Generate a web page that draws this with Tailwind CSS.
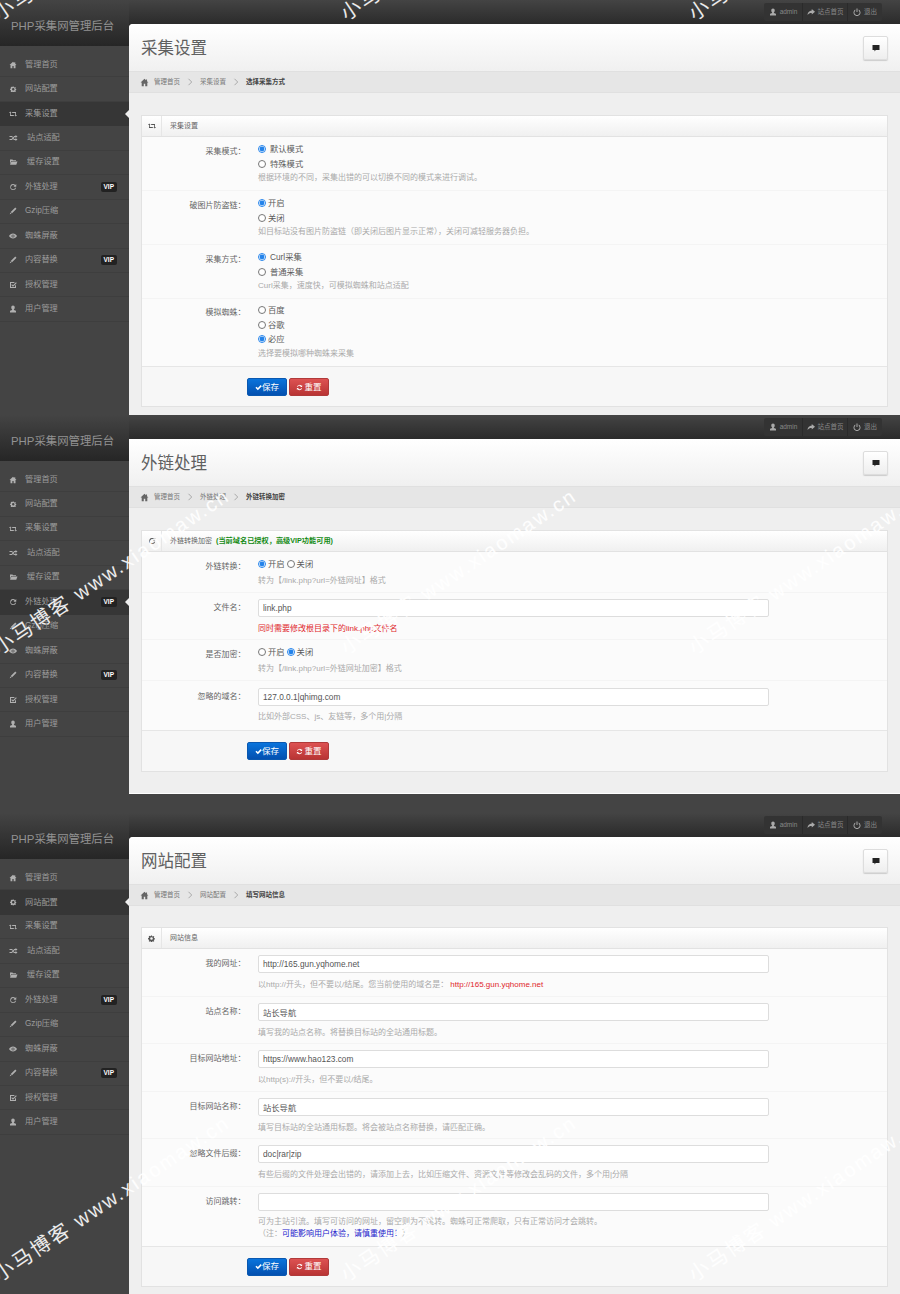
<!DOCTYPE html>
<html lang="zh-CN">
  <head>
    <meta charset="UTF-8" />
    <title>PHP采集网管理后台</title>
    <script src="https://cdn.jsdelivr.net/npm/@tailwindcss/browser@4"></script>
  </head>

  <body class="relative h-[1294px] overflow-hidden bg-[#444] font-['Liberation_Sans','Noto_Sans_CJK_SC',sans-serif]">
    <svg class="hidden">
      <symbol id="i-home" viewBox="0 0 16 16"><path d="M8 1.500 1 8h2v6.500h3.700V10h2.600v4.500H13V8h2l-2.500-2.300V2.500h-2v1.400z" /></symbol>
      <symbol id="i-cog" viewBox="0 0 16 16"><path fill-rule="evenodd" d="M6.800 1h2.400l.4 2 1.300.6 1.800-1.100 1.700 1.700-1.100 1.800.6 1.300 2 .4v2.400l-2 .4-.6 1.300 1.100 1.800-1.700 1.700-1.800-1.100-1.300.6-.4 2H6.800l-.4-2-1.300-.6-1.800 1.100-1.700-1.700 1.100-1.800-.6-1.300-2-.4V6.800l2-.4.6-1.300-1.100-1.800 1.700-1.700 1.800 1.100 1.300-.6zM8 5a3 3 0 1 0 0 6 3 3 0 0 0 0-6z" /></symbol>
      <symbol id="i-retweet" viewBox="0 0 16 16"><path d="M0 6 2.500 3 5 6H3.600v4H9l1.600 2H2V6zM16 10l-2.500 3L11 10h1.400V6H7L5.400 4H14v6z" /></symbol>
      <symbol id="i-random" viewBox="0 0 16 16"><path d="M12 2l4 3-4 3V6h-1.500L5 12H0v-2h4l5.500-6H12zM0 4h5l2 2.200-1.300 1.500L4 6H0zm12 4 4 3-4 3v-2H9l-2-2.200 1.300-1.500L10 10h2z" /></symbol>
      <symbol id="i-folder" viewBox="0 0 16 16"><path d="M1 3h5l1 1.500h6V6H3.500L1 12zM4 7h12l-2.500 6.500H1z" /></symbol>
      <symbol id="i-repeat" viewBox="0 0 16 16"><path d="M8 2a6 6 0 0 1 4.500 2L14.500 2v5.500H9l2-2A4 4 0 1 0 12 9.500h2.300A6 6 0 1 1 8 2z" /></symbol>
      <symbol id="i-pencil" viewBox="0 0 16 16"><path d="M12.500 1 15 3.500 6 12.500 3.500 10zM2.800 11l2.200 2.200-3.500 1.300z" /></symbol>
      <symbol id="i-eye" viewBox="0 0 16 16"><path fill-rule="evenodd" d="M8 3c3.500 0 6.300 2.300 8 5-1.700 2.700-4.500 5-8 5s-6.300-2.300-8-5c1.700-2.700 4.500-5 8-5zm0 2a3 3 0 1 0 0 6 3 3 0 0 0 0-6z" /><path d="M7 5h2v6H7z" /></symbol>
      <symbol id="i-check-box" viewBox="0 0 16 16"><path fill-rule="evenodd" d="M3 2h8.500L10 4H4v8h8V9.500l2-2V14H2V2zM14 2.500l1.500 1.500L8 11.500 4.500 8 6 6.500l2 2z" /></symbol>
      <symbol id="i-user" viewBox="0 0 16 16"><path d="M8 1c2.200 0 3.500 1.600 3.500 3.800 0 1.700-.8 3.200-1.700 4v1.400c2 .5 4.200 1.200 4.200 2.300V15H2v-2.500c0-1.100 2.200-1.800 4.200-2.300V8.800c-.9-.8-1.700-2.300-1.700-4C4.500 2.600 5.800 1 8 1z" /></symbol>
      <symbol id="i-share" viewBox="0 0 16 16"><path d="M9.500 2 16 7.500 9.500 13V9.800C5.500 9.800 2.800 11 1 14c.3-4.600 3.200-8.500 8.500-8.800z" /></symbol>
      <symbol id="i-off" viewBox="0 0 16 16"><path d="M7 1h2v7H7zM4.500 3v2.300a5 5 0 1 0 7 0V3a7 7 0 1 1-7 0z" /></symbol>
      <symbol id="i-comment" viewBox="0 0 16 16"><path d="M1 2h14v10H7.500L5 15v-3H1z" /></symbol>
      <symbol id="i-check" viewBox="0 0 16 16"><path d="M1 8.500 3.500 6l3 3L13 2.500 15.500 5l-9 9z" /></symbol>
      <symbol id="i-refresh" viewBox="0 0 16 16"><path d="M8 2a6 6 0 0 1 4.400 1.900L14 2.500V7H9.500l1.400-1.500A4 4 0 0 0 4.300 6.500H2.200A6 6 0 0 1 8 2zM2 9h4.500L5.100 10.500a4 4 0 0 0 6.600-1h2.100A6 6 0 0 1 3.600 12.100L2 13.500z" /></symbol>
      <symbol id="i-chevron" viewBox="0 0 6 8"><path d="M1.500 .8 4.700 4 1.500 7.200" fill="none" stroke="#999" stroke-width=".8" /></symbol>
    </svg>

    <!-- 采集设置 -->
    <section class="flex h-[415px] overflow-hidden">
      <aside class="w-[129px] shrink-0 bg-[#444]">
        <div class="flex h-[46px] items-center bg-gradient-to-b from-[#444] to-[#262626] pl-[11px] pt-[8px] text-[11.4px] text-[#929292]">PHP采集网管理后台</div>
        <nav class="pt-[7px] text-[8.2px] text-[#9c9c9c]">
          <a class="flex h-[24.45px] items-center border-b border-[#3e3e3e] pl-[9px]"><svg class="h-[8px] w-[8px] fill-[#b0b0b0]"><use href="#i-home" /></svg><span class="ml-[8px]">管理首页</span></a>
          <a class="flex h-[24.45px] items-center border-b border-[#3e3e3e] pl-[10px]"><svg class="h-[6.500px] w-[6.500px] fill-[#b0b0b0]"><use href="#i-cog" /></svg><span class="ml-[8.500px]">网站配置</span></a>
          <a class="relative flex h-[24.45px] items-center bg-[#363636] pl-[9px]"><svg class="h-[8px] w-[8px] fill-[#b0b0b0]"><use href="#i-retweet" /></svg><span class="ml-[8px]">采集设置</span><i class="absolute right-0 top-[8px] border-y-[4px] border-r-[4px] border-y-transparent border-r-[#efefef]"></i></a>
          <a class="flex h-[24.45px] items-center border-b border-[#3e3e3e] pl-[9px]"><svg class="h-[8px] w-[9px] fill-[#b0b0b0]"><use href="#i-random" /></svg><span class="ml-[9px]">站点适配</span></a>
          <a class="flex h-[24.45px] items-center border-b border-[#3e3e3e] pl-[9px]"><svg class="h-[8px] w-[9px] fill-[#b0b0b0]"><use href="#i-folder" /></svg><span class="ml-[9px]">缓存设置</span></a>
          <a class="flex h-[24.45px] items-center border-b border-[#3e3e3e] pl-[9px]"><svg class="h-[8px] w-[8px] fill-[#b0b0b0]"><use href="#i-repeat" /></svg><span class="ml-[8px]">外链处理</span><b class="ml-auto mr-[12px] rounded-[2px] bg-[#222] px-[3px] text-[6.5px] leading-[10px] text-white">VIP</b></a>
          <a class="flex h-[24.45px] items-center border-b border-[#3e3e3e] pl-[9px]"><svg class="h-[8px] w-[8px] fill-[#b0b0b0]"><use href="#i-pencil" /></svg><span class="ml-[8px]">Gzip压缩</span></a>
          <a class="flex h-[24.45px] items-center border-b border-[#3e3e3e] pl-[9px]"><svg class="h-[8px] w-[8px] fill-[#b0b0b0]"><use href="#i-eye" /></svg><span class="ml-[8px]">蜘蛛屏蔽</span></a>
          <a class="flex h-[24.45px] items-center border-b border-[#3e3e3e] pl-[9px]"><svg class="h-[8px] w-[8px] fill-[#b0b0b0]"><use href="#i-pencil" /></svg><span class="ml-[8px]">内容替换</span><b class="ml-auto mr-[12px] rounded-[2px] bg-[#222] px-[3px] text-[6.5px] leading-[10px] text-white">VIP</b></a>
          <a class="flex h-[24.45px] items-center border-b border-[#3e3e3e] pl-[9px]"><svg class="h-[8px] w-[8px] fill-[#b0b0b0]"><use href="#i-check-box" /></svg><span class="ml-[8px]">授权管理</span></a>
          <a class="flex h-[24.45px] items-center border-b border-[#3e3e3e] pl-[9px]"><svg class="h-[8px] w-[8px] fill-[#b0b0b0]"><use href="#i-user" /></svg><span class="ml-[8px]">用户管理</span></a>
        </nav>
      </aside>

      <div class="min-w-0 flex-1 bg-[#2b2b2b]">
        <div class="flex h-[24px] justify-end bg-gradient-to-b from-[#444] to-[#2b2b2b] pr-[18px] pt-[3px]">
          <div class="flex h-[18px] rounded-[2px] bg-[#333] text-[6.5px] text-[#888]">
            <a class="flex w-[39px] items-center justify-center gap-[3px] border-r border-[#2a2a2a]"><svg class="h-[8px] w-[8px] fill-[#aaa]"><use href="#i-user" /></svg>admin</a>
            <a class="flex w-[45px] items-center justify-center gap-[3px] border-r border-[#2a2a2a]"><svg class="h-[8px] w-[8px] fill-[#aaa]"><use href="#i-share" /></svg>站点首页</a>
            <a class="flex w-[34px] items-center justify-center gap-[3px]"><svg class="h-[8px] w-[8px] fill-[#aaa]"><use href="#i-off" /></svg>退出</a>
          </div>
        </div>
        <main class="h-[391px] rounded-tl-[4px] bg-[#efefef]">
          <div class="flex h-[47px] items-center justify-between rounded-tl-[4px] bg-gradient-to-b from-white to-[#f0f0f0] px-[12px]">
            <h1 class="mt-[2px] text-[16.5px] text-[#606060]">采集设置</h1>
            <button class="flex h-[24px] w-[25px] items-center justify-center rounded-[2px] border border-[#ddd] bg-gradient-to-b from-white to-[#eee] shadow-[0_1px_1px_#ccc]"><svg class="h-[8px] w-[8px] fill-[#222]"><use href="#i-comment" /></svg></button>
          </div>
          <div class="flex h-[22px] items-center border-y border-[#e0e0e0] bg-[#e6e6e6] pl-[11px] text-[6.5px] text-[#777]">
            <svg class="mr-[5px] mt-[1px] h-[9px] w-[9px] fill-[#666]"><use href="#i-home" /></svg>管理首页<svg class="mx-[7px] h-[8px] w-[6px]"><use href="#i-chevron" /></svg>采集设置<svg class="mx-[7px] h-[8px] w-[6px]"><use href="#i-chevron" /></svg><b class="text-[#444]">选择采集方式</b>
          </div>
          <div class="px-[12px] pt-[22px]">
            <div class="border border-[#e2e2e2] bg-[#fbfbfb]">
              <div class="flex h-[21px] items-center border-b border-[#e2e2e2] bg-gradient-to-b from-white to-[#f0f0f0]">
                <span class="flex h-full w-[20px] items-center justify-center border-r border-[#e6e6e6]"><svg class="h-[8px] w-[8px] fill-[#555]"><use href="#i-retweet" /></svg></span>
                <span class="ml-[8px] text-[7px] text-[#666]">采集设置</span>
              </div>

              <div class="flex h-[54px] border-b border-[#f4f4f4] pt-[5px]">
                <label class="mt-[3px] w-[103.500px] text-right text-[8px] leading-[14px] text-[#666]">采集模式：</label>
                <div class="ml-[12.500px] text-[8.3px] leading-[14.500px] text-[#5a5a5a]">
                  <div class="flex items-center"><input type="radio" checked class="m-0 h-[8px] w-[8px] accent-[#2483ea]" /><span class="ml-[4px]">默认模式</span></div>
                  <div class="flex items-center"><input type="radio" class="m-0 h-[8px] w-[8px]" /><span class="ml-[4px]">特殊模式</span></div>
                  <p class="text-[8px] text-[#aaa]">根据环境的不同，采集出错的可以切换不同的模式来进行调试。</p>
                </div>
              </div>
              <div class="flex h-[54px] border-b border-[#f4f4f4] pt-[5px]">
                <label class="mt-[3px] w-[103.500px] text-right text-[8px] leading-[14px] text-[#666]">破图片防盗链：</label>
                <div class="ml-[12.500px] text-[8.3px] leading-[14.500px] text-[#5a5a5a]">
                  <div class="flex items-center"><input type="radio" checked class="m-0 h-[8px] w-[8px] accent-[#2483ea]" /><span class="ml-[2px]">开启</span></div>
                  <div class="flex items-center"><input type="radio" class="m-0 h-[8px] w-[8px]" /><span class="ml-[2px]">关闭</span></div>
                  <p class="text-[8px] text-[#aaa]">如目标站没有图片防盗链（即关闭后图片显示正常），关闭可减轻服务器负担。</p>
                </div>
              </div>
              <div class="flex h-[54px] border-b border-[#f4f4f4] pt-[5px]">
                <label class="mt-[3px] w-[103.500px] text-right text-[8px] leading-[14px] text-[#666]">采集方式：</label>
                <div class="ml-[12.500px] text-[8.3px] leading-[14.500px] text-[#5a5a5a]">
                  <div class="flex items-center"><input type="radio" checked class="m-0 h-[8px] w-[8px] accent-[#2483ea]" /><span class="ml-[4px]">Curl采集</span></div>
                  <div class="flex items-center"><input type="radio" class="m-0 h-[8px] w-[8px]" /><span class="ml-[4px]">普通采集</span></div>
                  <p class="text-[8px] text-[#aaa]">Curl采集，速度快，可模拟蜘蛛和站点适配</p>
                </div>
              </div>
              <div class="flex h-[67px] pt-[4px]">
                <label class="mt-[3px] w-[103.500px] text-right text-[8px] leading-[14px] text-[#666]">模拟蜘蛛：</label>
                <div class="ml-[12.500px] text-[8.3px] leading-[14.500px] text-[#5a5a5a]">
                  <div class="flex items-center"><input type="radio" class="m-0 h-[8px] w-[8px]" /><span class="ml-[2px]">百度</span></div>
                  <div class="flex items-center"><input type="radio" class="m-0 h-[8px] w-[8px]" /><span class="ml-[2px]">谷歌</span></div>
                  <div class="flex items-center"><input type="radio" checked class="m-0 h-[8px] w-[8px] accent-[#2483ea]" /><span class="ml-[2px]">必应</span></div>
                  <p class="text-[8px] text-[#aaa]">选择要模拟哪种蜘蛛来采集</p>
                </div>
              </div>

              <div class="flex h-[40px] gap-[2px] border-t border-[#e6e6e6] bg-[#f7f7f7] pl-[105px] pt-[11px]">
                <button class="flex h-[18px] w-[40px] items-center justify-center rounded-[2px] border border-[#0a58b0] bg-gradient-to-b from-[#0a74dc] to-[#0450b0] text-[8.5px] text-white"><svg class="h-[7px] w-[7px] fill-white"><use href="#i-check" /></svg>保存</button>
                <button class="flex h-[18px] w-[40px] items-center justify-center rounded-[2px] border border-[#b03a3a] bg-gradient-to-b from-[#dd5252] to-[#b93434] text-[8.5px] text-white"><svg class="mr-[1px] h-[7px] w-[7px] fill-white"><use href="#i-refresh" /></svg>重置</button>
              </div>
            </div>
          </div>
        </main>
      </div>
    </section>

    <!-- 外链处理 -->
    <section class="flex h-[398px] overflow-hidden">
      <aside class="w-[129px] shrink-0 bg-[#444]">
        <div class="flex h-[46px] items-center bg-gradient-to-b from-[#444] to-[#262626] pl-[11px] pt-[8px] text-[11.4px] text-[#929292]">PHP采集网管理后台</div>
        <nav class="pt-[7px] text-[8.2px] text-[#9c9c9c]">
          <a class="flex h-[24.45px] items-center border-b border-[#3e3e3e] pl-[9px]"><svg class="h-[8px] w-[8px] fill-[#b0b0b0]"><use href="#i-home" /></svg><span class="ml-[8px]">管理首页</span></a>
          <a class="flex h-[24.45px] items-center border-b border-[#3e3e3e] pl-[10px]"><svg class="h-[6.500px] w-[6.500px] fill-[#b0b0b0]"><use href="#i-cog" /></svg><span class="ml-[8.500px]">网站配置</span></a>
          <a class="flex h-[24.45px] items-center border-b border-[#3e3e3e] pl-[9px]"><svg class="h-[8px] w-[8px] fill-[#b0b0b0]"><use href="#i-retweet" /></svg><span class="ml-[8px]">采集设置</span></a>
          <a class="flex h-[24.45px] items-center border-b border-[#3e3e3e] pl-[9px]"><svg class="h-[8px] w-[9px] fill-[#b0b0b0]"><use href="#i-random" /></svg><span class="ml-[9px]">站点适配</span></a>
          <a class="flex h-[24.45px] items-center border-b border-[#3e3e3e] pl-[9px]"><svg class="h-[8px] w-[9px] fill-[#b0b0b0]"><use href="#i-folder" /></svg><span class="ml-[9px]">缓存设置</span></a>
          <a class="relative flex h-[24.45px] items-center bg-[#363636] pl-[9px]"><svg class="h-[8px] w-[8px] fill-[#b0b0b0]"><use href="#i-repeat" /></svg><span class="ml-[8px]">外链处理</span><b class="ml-auto mr-[12px] rounded-[2px] bg-[#222] px-[3px] text-[6.5px] leading-[10px] text-white">VIP</b><i class="absolute right-0 top-[8px] border-y-[4px] border-r-[4px] border-y-transparent border-r-[#efefef]"></i></a>
          <a class="flex h-[24.45px] items-center border-b border-[#3e3e3e] pl-[9px]"><svg class="h-[8px] w-[8px] fill-[#b0b0b0]"><use href="#i-pencil" /></svg><span class="ml-[8px]">Gzip压缩</span></a>
          <a class="flex h-[24.45px] items-center border-b border-[#3e3e3e] pl-[9px]"><svg class="h-[8px] w-[8px] fill-[#b0b0b0]"><use href="#i-eye" /></svg><span class="ml-[8px]">蜘蛛屏蔽</span></a>
          <a class="flex h-[24.45px] items-center border-b border-[#3e3e3e] pl-[9px]"><svg class="h-[8px] w-[8px] fill-[#b0b0b0]"><use href="#i-pencil" /></svg><span class="ml-[8px]">内容替换</span><b class="ml-auto mr-[12px] rounded-[2px] bg-[#222] px-[3px] text-[6.5px] leading-[10px] text-white">VIP</b></a>
          <a class="flex h-[24.45px] items-center border-b border-[#3e3e3e] pl-[9px]"><svg class="h-[8px] w-[8px] fill-[#b0b0b0]"><use href="#i-check-box" /></svg><span class="ml-[8px]">授权管理</span></a>
          <a class="flex h-[24.45px] items-center border-b border-[#3e3e3e] pl-[9px]"><svg class="h-[8px] w-[8px] fill-[#b0b0b0]"><use href="#i-user" /></svg><span class="ml-[8px]">用户管理</span></a>
        </nav>
      </aside>

      <div class="min-w-0 flex-1">
        <div class="flex h-[24px] justify-end bg-gradient-to-b from-[#444] to-[#2b2b2b] pr-[18px] pt-[3px]">
          <div class="flex h-[18px] rounded-[2px] bg-[#333] text-[6.5px] text-[#888]">
            <a class="flex w-[39px] items-center justify-center gap-[3px] border-r border-[#2a2a2a]"><svg class="h-[8px] w-[8px] fill-[#aaa]"><use href="#i-user" /></svg>admin</a>
            <a class="flex w-[45px] items-center justify-center gap-[3px] border-r border-[#2a2a2a]"><svg class="h-[8px] w-[8px] fill-[#aaa]"><use href="#i-share" /></svg>站点首页</a>
            <a class="flex w-[34px] items-center justify-center gap-[3px]"><svg class="h-[8px] w-[8px] fill-[#aaa]"><use href="#i-off" /></svg>退出</a>
          </div>
        </div>
        <main class="h-[355px] border-b border-white bg-[#efefef]">
          <div class="flex h-[47px] items-center justify-between bg-gradient-to-b from-white to-[#f0f0f0] px-[12px]">
            <h1 class="mt-[2px] text-[16.5px] text-[#606060]">外链处理</h1>
            <button class="flex h-[24px] w-[25px] items-center justify-center rounded-[2px] border border-[#ddd] bg-gradient-to-b from-white to-[#eee] shadow-[0_1px_1px_#ccc]"><svg class="h-[8px] w-[8px] fill-[#222]"><use href="#i-comment" /></svg></button>
          </div>
          <div class="flex h-[22px] items-center border-y border-[#e0e0e0] bg-[#e6e6e6] pl-[11px] text-[6.5px] text-[#777]">
            <svg class="mr-[5px] mt-[1px] h-[9px] w-[9px] fill-[#666]"><use href="#i-home" /></svg>管理首页<svg class="mx-[7px] h-[8px] w-[6px]"><use href="#i-chevron" /></svg>外链处理<svg class="mx-[7px] h-[8px] w-[6px]"><use href="#i-chevron" /></svg><b class="text-[#444]">外链转换加密</b>
          </div>
          <div class="px-[12px] pt-[22px]">
            <div class="border border-[#e2e2e2] bg-[#fbfbfb]">
              <div class="flex h-[21px] items-center border-b border-[#e2e2e2] bg-gradient-to-b from-white to-[#f0f0f0]">
                <span class="flex h-full w-[20px] items-center justify-center border-r border-[#e6e6e6]"><svg class="h-[8px] w-[8px] fill-[#555]"><use href="#i-repeat" /></svg></span>
                <span class="ml-[8px] text-[7px] text-[#666]">外链转换加密</span>
                <b class="ml-[4px] text-[7.2px] text-[#128a12]">(当前域名已授权，高级VIP功能可用)</b>
              </div>

              <div class="flex h-[41px] border-b border-[#f4f4f4] pt-[5px]">
                <label class="mt-[3px] w-[103.500px] text-right text-[8px] leading-[14px] text-[#666]">外链转换：</label>
                <div class="ml-[12.500px] text-[8.3px] leading-[14.500px] text-[#5a5a5a]">
                  <div class="flex items-center"><input type="radio" checked class="m-0 h-[8px] w-[8px] accent-[#2483ea]" /><span class="ml-[2px]">开启</span><input type="radio" class="m-0 ml-[2px] h-[8px] w-[8px]" /><span class="ml-[2px]">关闭</span></div>
                  <p class="mt-[2px] text-[8px] text-[#aaa]">转为【/link.php?url=外链网址】格式</p>
                </div>
              </div>
              <div class="flex h-[47px] border-b border-[#f4f4f4] pt-[6px]">
                <label class="mt-[2px] w-[103.500px] text-right text-[8px] leading-[14px] text-[#666]">文件名：</label>
                <div class="ml-[12.500px] w-[511px]">
                  <input type="text" value="link.php" class="block h-[18px] w-full rounded-[2px] border border-[#ddd] bg-white px-[4px] text-[8.3px] text-[#555]" />
                  <p class="mt-[6px] text-[8px] leading-[12px] text-[#e0262c]">同时需要修改根目录下的link.php文件名</p>
                </div>
              </div>
              <div class="flex h-[41px] border-b border-[#f4f4f4] pt-[5px]">
                <label class="mt-[3px] w-[103.500px] text-right text-[8px] leading-[14px] text-[#666]">是否加密：</label>
                <div class="ml-[12.500px] text-[8.3px] leading-[14.500px] text-[#5a5a5a]">
                  <div class="flex items-center"><input type="radio" class="m-0 h-[8px] w-[8px]" /><span class="ml-[2px]">开启</span><input type="radio" checked class="m-0 ml-[2px] h-[8px] w-[8px] accent-[#2483ea]" /><span class="ml-[2px]">关闭</span></div>
                  <p class="mt-[2px] text-[8px] text-[#aaa]">转为【/link.php?url=外链网址加密】格式</p>
                </div>
              </div>
              <div class="flex h-[49px] pt-[7px]">
                <label class="mt-[2px] w-[103.500px] text-right text-[8px] leading-[14px] text-[#666]">忽略的域名：</label>
                <div class="ml-[12.500px] w-[511px]">
                  <input type="text" value="127.0.0.1|qhimg.com" class="block h-[18px] w-full rounded-[2px] border border-[#ddd] bg-white px-[4px] text-[8.3px] text-[#555]" />
                  <p class="mt-[5px] text-[8px] leading-[12px] text-[#aaa]">比如外部CSS、js、友链等，多个用|分隔</p>
                </div>
              </div>

              <div class="flex h-[41px] gap-[2px] border-t border-[#e6e6e6] bg-[#f7f7f7] pl-[105px] pt-[11px]">
                <button class="flex h-[18px] w-[40px] items-center justify-center rounded-[2px] border border-[#0a58b0] bg-gradient-to-b from-[#0a74dc] to-[#0450b0] text-[8.5px] text-white"><svg class="h-[7px] w-[7px] fill-white"><use href="#i-check" /></svg>保存</button>
                <button class="flex h-[18px] w-[40px] items-center justify-center rounded-[2px] border border-[#b03a3a] bg-gradient-to-b from-[#dd5252] to-[#b93434] text-[8.5px] text-white"><svg class="mr-[1px] h-[7px] w-[7px] fill-white"><use href="#i-refresh" /></svg>重置</button>
              </div>
            </div>
          </div>
        </main>
      </div>
    </section>

    <!-- 网站配置 -->
    <section class="flex h-[481px] overflow-hidden">
      <aside class="w-[129px] shrink-0 bg-[#444]">
        <div class="flex h-[46px] items-center bg-gradient-to-b from-[#444] to-[#262626] pl-[11px] pt-[8px] text-[11.4px] text-[#929292]">PHP采集网管理后台</div>
        <nav class="pt-[7px] text-[8.2px] text-[#9c9c9c]">
          <a class="flex h-[24.45px] items-center border-b border-[#3e3e3e] pl-[9px]"><svg class="h-[8px] w-[8px] fill-[#b0b0b0]"><use href="#i-home" /></svg><span class="ml-[8px]">管理首页</span></a>
          <a class="relative flex h-[24.45px] items-center bg-[#363636] pl-[10px]"><svg class="h-[6.500px] w-[6.500px] fill-[#b0b0b0]"><use href="#i-cog" /></svg><span class="ml-[8.500px]">网站配置</span><i class="absolute right-0 top-[8px] border-y-[4px] border-r-[4px] border-y-transparent border-r-[#efefef]"></i></a>
          <a class="flex h-[24.45px] items-center border-b border-[#3e3e3e] pl-[9px]"><svg class="h-[8px] w-[8px] fill-[#b0b0b0]"><use href="#i-retweet" /></svg><span class="ml-[8px]">采集设置</span></a>
          <a class="flex h-[24.45px] items-center border-b border-[#3e3e3e] pl-[9px]"><svg class="h-[8px] w-[9px] fill-[#b0b0b0]"><use href="#i-random" /></svg><span class="ml-[9px]">站点适配</span></a>
          <a class="flex h-[24.45px] items-center border-b border-[#3e3e3e] pl-[9px]"><svg class="h-[8px] w-[9px] fill-[#b0b0b0]"><use href="#i-folder" /></svg><span class="ml-[9px]">缓存设置</span></a>
          <a class="flex h-[24.45px] items-center border-b border-[#3e3e3e] pl-[9px]"><svg class="h-[8px] w-[8px] fill-[#b0b0b0]"><use href="#i-repeat" /></svg><span class="ml-[8px]">外链处理</span><b class="ml-auto mr-[12px] rounded-[2px] bg-[#222] px-[3px] text-[6.5px] leading-[10px] text-white">VIP</b></a>
          <a class="flex h-[24.45px] items-center border-b border-[#3e3e3e] pl-[9px]"><svg class="h-[8px] w-[8px] fill-[#b0b0b0]"><use href="#i-pencil" /></svg><span class="ml-[8px]">Gzip压缩</span></a>
          <a class="flex h-[24.45px] items-center border-b border-[#3e3e3e] pl-[9px]"><svg class="h-[8px] w-[8px] fill-[#b0b0b0]"><use href="#i-eye" /></svg><span class="ml-[8px]">蜘蛛屏蔽</span></a>
          <a class="flex h-[24.45px] items-center border-b border-[#3e3e3e] pl-[9px]"><svg class="h-[8px] w-[8px] fill-[#b0b0b0]"><use href="#i-pencil" /></svg><span class="ml-[8px]">内容替换</span><b class="ml-auto mr-[12px] rounded-[2px] bg-[#222] px-[3px] text-[6.5px] leading-[10px] text-white">VIP</b></a>
          <a class="flex h-[24.45px] items-center border-b border-[#3e3e3e] pl-[9px]"><svg class="h-[8px] w-[8px] fill-[#b0b0b0]"><use href="#i-check-box" /></svg><span class="ml-[8px]">授权管理</span></a>
          <a class="flex h-[24.45px] items-center border-b border-[#3e3e3e] pl-[9px]"><svg class="h-[8px] w-[8px] fill-[#b0b0b0]"><use href="#i-user" /></svg><span class="ml-[8px]">用户管理</span></a>
        </nav>
      </aside>

      <div class="min-w-0 flex-1 bg-[#2b2b2b]">
        <div class="flex h-[24px] justify-end bg-gradient-to-b from-[#444] to-[#2b2b2b] pr-[18px] pt-[3px]">
          <div class="flex h-[18px] rounded-[2px] bg-[#333] text-[6.5px] text-[#888]">
            <a class="flex w-[39px] items-center justify-center gap-[3px] border-r border-[#2a2a2a]"><svg class="h-[8px] w-[8px] fill-[#aaa]"><use href="#i-user" /></svg>admin</a>
            <a class="flex w-[45px] items-center justify-center gap-[3px] border-r border-[#2a2a2a]"><svg class="h-[8px] w-[8px] fill-[#aaa]"><use href="#i-share" /></svg>站点首页</a>
            <a class="flex w-[34px] items-center justify-center gap-[3px]"><svg class="h-[8px] w-[8px] fill-[#aaa]"><use href="#i-off" /></svg>退出</a>
          </div>
        </div>
        <main class="h-[457px] rounded-tl-[4px] bg-[#efefef]">
          <div class="flex h-[47px] items-center justify-between rounded-tl-[4px] bg-gradient-to-b from-white to-[#f0f0f0] px-[12px]">
            <h1 class="mt-[2px] text-[16.5px] text-[#606060]">网站配置</h1>
            <button class="flex h-[24px] w-[25px] items-center justify-center rounded-[2px] border border-[#ddd] bg-gradient-to-b from-white to-[#eee] shadow-[0_1px_1px_#ccc]"><svg class="h-[8px] w-[8px] fill-[#222]"><use href="#i-comment" /></svg></button>
          </div>
          <div class="flex h-[22px] items-center border-y border-[#e0e0e0] bg-[#e6e6e6] pl-[11px] text-[6.5px] text-[#777]">
            <svg class="mr-[5px] mt-[1px] h-[9px] w-[9px] fill-[#666]"><use href="#i-home" /></svg>管理首页<svg class="mx-[7px] h-[8px] w-[6px]"><use href="#i-chevron" /></svg>网站配置<svg class="mx-[7px] h-[8px] w-[6px]"><use href="#i-chevron" /></svg><b class="text-[#444]">填写网站信息</b>
          </div>
          <div class="px-[12px] pt-[21px]">
            <div class="border border-[#e2e2e2] bg-[#fbfbfb]">
              <div class="flex h-[21px] items-center border-b border-[#e2e2e2] bg-gradient-to-b from-white to-[#f0f0f0]">
                <span class="flex h-full w-[20px] items-center justify-center border-r border-[#e6e6e6]"><svg class="h-[7px] w-[7px] fill-[#555]"><use href="#i-cog" /></svg></span>
                <span class="ml-[8px] text-[7px] text-[#666]">网站信息</span>
              </div>

              <div class="flex h-[47.500px] border-b border-[#f4f4f4] pt-[6px]">
                <label class="mt-[2px] w-[103.500px] text-right text-[8px] leading-[14px] text-[#666]">我的网址：</label>
                <div class="ml-[12.500px] w-[511px]">
                  <input type="text" value="http://165.gun.yqhome.net" class="block h-[18px] w-full rounded-[2px] border border-[#ddd] bg-white px-[4px] text-[8.3px] text-[#555]" />
                  <p class="mt-[6px] text-[8px] leading-[12px] text-[#aaa]">以http://开头，但不要以/结尾。您当前使用的域名是：<span class="ml-[2px] text-[#e0262c]">http://165.gun.yqhome.net</span></p>
                </div>
              </div>
              <div class="flex h-[47.500px] border-b border-[#f4f4f4] pt-[6px]">
                <label class="mt-[2px] w-[103.500px] text-right text-[8px] leading-[14px] text-[#666]">站点名称：</label>
                <div class="ml-[12.500px] w-[511px]">
                  <input type="text" value="站长导航" class="block h-[18px] w-full rounded-[2px] border border-[#ddd] bg-white px-[4px] text-[8.3px] text-[#555]" />
                  <p class="mt-[6px] text-[8px] leading-[12px] text-[#aaa]">填写我的站点名称。将替换目标站的全站通用标题。</p>
                </div>
              </div>
              <div class="flex h-[47.500px] border-b border-[#f4f4f4] pt-[6px]">
                <label class="mt-[2px] w-[103.500px] text-right text-[8px] leading-[14px] text-[#666]">目标网站地址：</label>
                <div class="ml-[12.500px] w-[511px]">
                  <input type="text" value="https://www.hao123.com" class="block h-[18px] w-full rounded-[2px] border border-[#ddd] bg-white px-[4px] text-[8.3px] text-[#555]" />
                  <p class="mt-[6px] text-[8px] leading-[12px] text-[#aaa]">以http(s)://开头，但不要以/结尾。</p>
                </div>
              </div>
              <div class="flex h-[47.500px] border-b border-[#f4f4f4] pt-[6px]">
                <label class="mt-[2px] w-[103.500px] text-right text-[8px] leading-[14px] text-[#666]">目标网站名称：</label>
                <div class="ml-[12.500px] w-[511px]">
                  <input type="text" value="站长导航" class="block h-[18px] w-full rounded-[2px] border border-[#ddd] bg-white px-[4px] text-[8.3px] text-[#555]" />
                  <p class="mt-[6px] text-[8px] leading-[12px] text-[#aaa]">填写目标站的全站通用标题。将会被站点名称替换，请匹配正确。</p>
                </div>
              </div>
              <div class="flex h-[47.500px] border-b border-[#f4f4f4] pt-[6px]">
                <label class="mt-[2px] w-[103.500px] text-right text-[8px] leading-[14px] text-[#666]">忽略文件后缀：</label>
                <div class="ml-[12.500px] w-[511px]">
                  <input type="text" value="doc|rar|zip" class="block h-[18px] w-full rounded-[2px] border border-[#ddd] bg-white px-[4px] text-[8.3px] text-[#555]" />
                  <p class="mt-[6px] text-[8px] leading-[12px] text-[#aaa]">有些后缀的文件处理会出错的，请添加上去，比如压缩文件、资源文件等修改会乱码的文件，多个用|分隔</p>
                </div>
              </div>
              <div class="flex h-[59px] pt-[6px]">
                <label class="mt-[2px] w-[103.500px] text-right text-[8px] leading-[14px] text-[#666]">访问跳转：</label>
                <div class="ml-[12.500px] w-[511px]">
                  <input type="text" class="block h-[18px] w-full rounded-[2px] border border-[#ddd] bg-white px-[4px] text-[8.3px] text-[#555]" />
                  <p class="mt-[5px] whitespace-nowrap text-[8px] leading-[12px] text-[#aaa]">可为主站引流。填写可访问的网址，留空则为不跳转。蜘蛛可正常爬取，只有正常访问才会跳转。</p>
                  <p class="text-[8px] leading-[12px] text-[#aaa]">（注：<span class="text-[#2222cc]">可能影响用户体验，请慎重使用！</span>）</p>
                </div>
              </div>

              <div class="flex h-[40px] gap-[2px] border-t border-[#e6e6e6] bg-[#f7f7f7] pl-[105px] pt-[11px]">
                <button class="flex h-[18px] w-[40px] items-center justify-center rounded-[2px] border border-[#0a58b0] bg-gradient-to-b from-[#0a74dc] to-[#0450b0] text-[8.5px] text-white"><svg class="h-[7px] w-[7px] fill-white"><use href="#i-check" /></svg>保存</button>
                <button class="flex h-[18px] w-[40px] items-center justify-center rounded-[2px] border border-[#b03a3a] bg-gradient-to-b from-[#dd5252] to-[#b93434] text-[8.5px] text-white"><svg class="mr-[1px] h-[7px] w-[7px] fill-white"><use href="#i-refresh" /></svg>重置</button>
              </div>
            </div>
          </div>
        </main>
      </div>
    </section>

    <!-- watermark -->
    <div class="pointer-events-none absolute inset-0 overflow-hidden text-[20px] tracking-[2.200px] whitespace-nowrap text-white/90">
      <span class="absolute left-[4px] top-[632px] origin-bottom-left -rotate-[34deg]">小马博客 www.xiaomaw.cn</span>
      <span class="absolute left-[351px] top-[632px] origin-bottom-left -rotate-[34deg]">小马博客 www.xiaomaw.cn</span>
      <span class="absolute left-[699px] top-[632px] origin-bottom-left -rotate-[34deg]">小马博客 www.xiaomaw.cn</span>
      <span class="absolute left-[4px] top-[1259px] origin-bottom-left -rotate-[34deg]">小马博客 www.xiaomaw.cn</span>
      <span class="absolute left-[351px] top-[1259px] origin-bottom-left -rotate-[34deg]">小马博客 www.xiaomaw.cn</span>
      <span class="absolute left-[699px] top-[1259px] origin-bottom-left -rotate-[34deg]">小马博客 www.xiaomaw.cn</span>
      <span class="absolute left-[4px] top-[-2px] origin-bottom-left -rotate-[34deg]">小马博客 www.xiaomaw.cn</span>
      <span class="absolute left-[351px] top-[-2px] origin-bottom-left -rotate-[34deg]">小马博客 www.xiaomaw.cn</span>
      <span class="absolute left-[699px] top-[-2px] origin-bottom-left -rotate-[34deg]">小马博客 www.xiaomaw.cn</span>
    </div>
  </body>
</html>
